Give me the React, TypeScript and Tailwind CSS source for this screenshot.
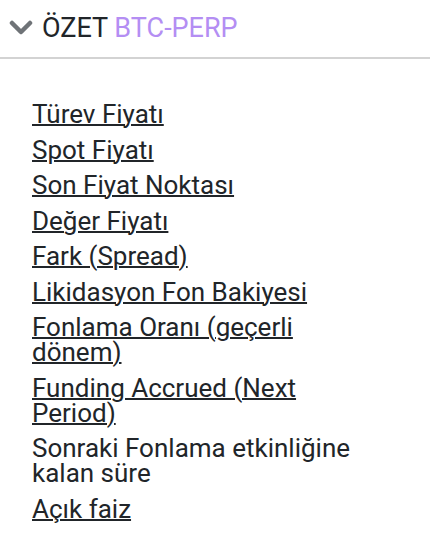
const items: { label: string; link: boolean }[] = [
  { label: 'Türev Fiyatı', link: true },
  { label: 'Spot Fiyatı', link: true },
  { label: 'Son Fiyat Noktası', link: true },
  { label: 'Değer Fiyatı', link: true },
  { label: 'Fark (Spread)', link: true },
  { label: 'Likidasyon Fon Bakiyesi', link: true },
  { label: 'Fonlama Oranı (geçerli dönem)', link: true },
  { label: 'Funding Accrued (Next Period)', link: true },
  { label: 'Sonraki Fonlama etkinliğine kalan süre', link: false },
  { label: 'Açık faiz', link: true },
];

export default function App() {
  return (
    <main className="min-h-screen bg-white text-[#212529] font-['Roboto',sans-serif]">
      <div className="flex items-center gap-[9px] pl-[9px] pt-[10px] pb-[11px]">
        <svg width="24" height="16" viewBox="0 0 24 16" className="text-[#6f7377]">
          <path d="M3 3 L12 12 L21 3" fill="none" stroke="currentColor" strokeWidth="4.5" strokeLinecap="round" strokeLinejoin="round" />
        </svg>
        <h1 className="text-[27px] leading-[36px]">
          ÖZET <span className="text-[#b48ef3]">BTC-PERP</span>
        </h1>
      </div>
      <div className="h-[2px] bg-[#d3d3d3]" />
      <ul className="pl-[32px] pt-[43px] w-[365px] flex flex-col gap-[10.5px] text-[26px] leading-[25px]">
        {items.map((item) => (
          <li key={item.label}>
            {item.link ? (
              <a href="#" className="underline decoration-2">
                {item.label}
              </a>
            ) : (
              <span>{item.label}</span>
            )}
          </li>
        ))}
      </ul>
    </main>
  );
}
